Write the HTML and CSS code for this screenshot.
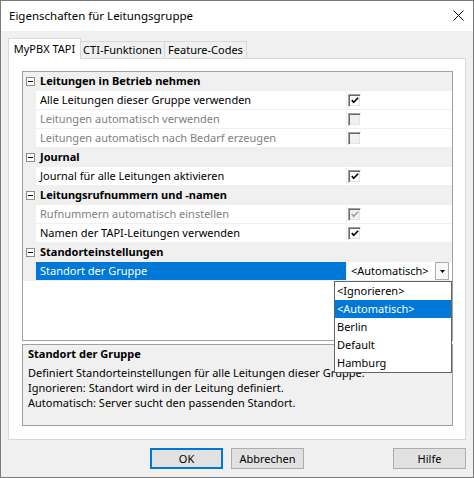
FILE: index.html
```html
<!DOCTYPE html>
<html lang="de">
<head>
<meta charset="utf-8">
<title>Eigenschaften für Leitungsgruppe</title>
<link rel="stylesheet" href="styles.css">
</head>
<body>
<div class="window">
  <div class="titlebar">
    <span class="title">Eigenschaften für Leitungsgruppe</span>
    <svg class="close" width="11" height="11" viewBox="0 0 11 11"><path d="M0.5 0.5 L10.5 10.5 M10.5 0.5 L0.5 10.5" stroke="#000" stroke-width="1" fill="none"/></svg>
  </div>
  <div class="client">
    <div class="tabs">
      <div class="tab active">MyPBX TAPI</div>
      <div class="tab tab-cti">CTI-Funktionen</div>
      <div class="tab tab-fc">Feature-Codes</div>
    </div>
    <div class="panel">
      <div class="grid">
        <div class="row cat"><span class="gutter"><i class="exp"></i></span><span class="cat-label">Leitungen in Betrieb nehmen</span></div>
        <div class="row"><span class="gutter"></span><span class="name">Alle Leitungen dieser Gruppe verwenden</span><span class="value"><span class="check"><svg width="11" height="11" viewBox="0 0 11 11"><path d="M2 5 L4 7.5 L9 2.5" stroke="#000" stroke-width="1.8" fill="none"/></svg></span></span></div>
        <div class="row"><span class="gutter"></span><span class="name dis">Leitungen automatisch verwenden</span><span class="value"><span class="check off"></span></span></div>
        <div class="row"><span class="gutter"></span><span class="name dis">Leitungen automatisch nach Bedarf erzeugen</span><span class="value"><span class="check off"></span></span></div>
        <div class="row cat"><span class="gutter"><i class="exp"></i></span><span class="cat-label">Journal</span></div>
        <div class="row"><span class="gutter"></span><span class="name">Journal für alle Leitungen aktivieren</span><span class="value"><span class="check"><svg width="11" height="11" viewBox="0 0 11 11"><path d="M2 5 L4 7.5 L9 2.5" stroke="#000" stroke-width="1.8" fill="none"/></svg></span></span></div>
        <div class="row cat"><span class="gutter"><i class="exp"></i></span><span class="cat-label">Leitungsrufnummern und -namen</span></div>
        <div class="row"><span class="gutter"></span><span class="name dis">Rufnummern automatisch einstellen</span><span class="value"><span class="check off"><svg width="11" height="11" viewBox="0 0 11 11"><path d="M2 5 L4 7.5 L9 2.5" stroke="#a0a0a0" stroke-width="1.8" fill="none"/></svg></span></span></div>
        <div class="row"><span class="gutter"></span><span class="name">Namen der TAPI-Leitungen verwenden</span><span class="value"><span class="check"><svg width="11" height="11" viewBox="0 0 11 11"><path d="M2 5 L4 7.5 L9 2.5" stroke="#000" stroke-width="1.8" fill="none"/></svg></span></span></div>
        <div class="row cat"><span class="gutter"><i class="exp"></i></span><span class="cat-label">Standorteinstellungen</span></div>
        <div class="row"><span class="gutter"></span><span class="name sel">Standort der Gruppe</span><span class="value combo"><span class="combo-text">&lt;Automatisch&gt;</span><span class="combo-btn"><svg width="5" height="3" viewBox="0 0 5 3"><path d="M0 0 H5 L2.5 3 Z" fill="#000"/></svg></span></span></div>
        <ul class="dropdown">
          <li>&lt;Ignorieren&gt;</li>
          <li class="hi">&lt;Automatisch&gt;</li>
          <li>Berlin</li>
          <li>Default</li>
          <li>Hamburg</li>
        </ul>
      </div>
      <div class="help">
        <div class="help-title">Standort der Gruppe</div>
        <div class="help-line">Definiert Standorteinstellungen für alle Leitungen dieser Gruppe.</div>
        <div class="help-line">Ignorieren: Standort wird in der Leitung definiert.</div>
        <div class="help-line">Automatisch: Server sucht den passenden Standort.</div>
      </div>
    </div>
    <div class="buttons">
      <button class="btn default">OK</button>
      <button class="btn">Abbrechen</button>
      <button class="btn help-btn">Hilfe</button>
    </div>
  </div>
</div>
</body>
</html>
```
FILE: styles.css
```css
* { box-sizing: border-box; }
html, body { margin: 0; padding: 0; }
body {
  width: 474px;
  height: 478px;
  overflow: hidden;
  font-family: "Noto Sans", "Open Sans", sans-serif;
  font-size: 11px;
  color: #000;
  background: #f0f0f0;
}
.window {
  width: 474px;
  height: 478px;
  border: 1px solid #7a7a7a;
  background: #f0f0f0;
}
.titlebar {
  height: 30px;
  background: #fff;
  display: flex;
  align-items: center;
  justify-content: space-between;
  padding: 0 9px 0 8px;
}
.title { line-height: 30px; font-size: 11.5px; }
.close { display: block; margin-top: -1px; }
.client { padding: 7px 7px 8px 7px; }
.tabs {
  display: flex;
  align-items: flex-end;
  height: 20px;
}
.tab {
  height: 17px;
  line-height: 16px;
  text-align: center;
  border-top: 1px solid #d9d9d9;
  border-right: 1px solid #d9d9d9;
  background: #f0f0f0;
  white-space: nowrap;
}
.tab.active {
  width: 73px;
  height: 21px;
  line-height: 20px;
  margin-bottom: -1px;
  background: #fff;
  border-left: 1px solid #d9d9d9;
  position: relative;
  z-index: 1;
}
.tab-cti { width: 84px; }
.tab-fc { width: 82px; }
.panel {
  height: 382px;
  border: 1px solid #d9d9d9;
  background: #fff;
  padding: 12px 12px 13px 13px;
}
.grid {
  position: relative;
  height: 270px;
  border: 1px solid #a0a0a0;
  background: #fff;
}
.row {
  display: grid;
  grid-template-columns: 13px 310px 106px;
  height: 19px;
}
.row.cat { background: #f0f0f0; }
.gutter {
  background: #f0f0f0;
  display: flex;
  align-items: center;
  justify-content: center;
}
.exp {
  display: block;
  width: 9px;
  height: 9px;
  border: 1px solid #8c8c8c;
  background: #fff;
  position: relative;
  margin-left: 2px;
}
.exp::after {
  content: "";
  position: absolute;
  left: 1px;
  top: 3px;
  width: 5px;
  height: 1px;
  background: #000;
}
.cat-label {
  grid-column: 2 / 4;
  font-weight: bold;
  padding-left: 4px;
  line-height: 18px;
}
.name {
  background: #fff;
  border-bottom: 1px solid #f0f0f0;
  padding-left: 4px;
  line-height: 18px;
  white-space: nowrap;
  overflow: hidden;
}
.name.dis { color: #808080; }
.name.sel { background: #0078d7; color: #fff; }
.value {
  background: #fff;
  border-left: 1px solid #f0f0f0;
  border-bottom: 1px solid #f0f0f0;
  display: flex;
  align-items: center;
  padding-left: 1px;
}
.check {
  width: 13px;
  height: 13px;
  border: 1px solid;
  border-color: #a0a0a0 #fff #fff #a0a0a0;
  box-shadow: inset 1px 1px 0 #696969, inset -1px -1px 0 #e3e3e3;
  background: #fff;
  display: flex;
  align-items: center;
  justify-content: center;
}
.check svg { display: block; margin: 1px 0 0 1px; }
.check.off { background: #f0f0f0; }
.combo { padding-left: 4px; justify-content: space-between; padding-right: 3px; }
.combo-text { line-height: 18px; }
.combo-btn {
  width: 14px;
  height: 18px;
  border: 1px solid #adadad;
  background: #f7f7f7;
  display: flex;
  align-items: center;
  justify-content: center;
}
.combo-btn svg { display: block; }
.dropdown {
  position: absolute;
  left: 311px;
  top: 209px;
  width: 118px;
  height: 92px;
  margin: 0;
  padding: 0;
  list-style: none;
  background: #fff;
  border: 1px solid #646464;
  z-index: 5;
}
.dropdown li {
  height: 18px;
  line-height: 18px;
  padding-left: 2px;
  white-space: nowrap;
}
.dropdown li.hi { background: #0078d7; color: #fff; }
.help {
  margin-top: 3px;
  height: 82px;
  border: 1px solid #a0a0a0;
  background: #f0f0f0;
  padding: 1px 5px 0 5px;
}
.help-title { font-weight: bold; line-height: 16px; margin-bottom: 3px; }
.help-line { line-height: 15px; white-space: nowrap; }
.buttons {
  display: flex;
  justify-content: flex-end;
  gap: 8px;
  margin-top: 8px;
  margin-right: 0;
}
.btn {
  width: 73px;
  height: 21px;
  padding: 0;
  border: 1px solid #adadad;
  background: #e1e1e1;
  font-family: inherit;
  font-size: 11px;
  color: #000;
}
.btn.default { border: 2px solid #0078d7; }
.help-btn { margin-left: 81px; }
```
